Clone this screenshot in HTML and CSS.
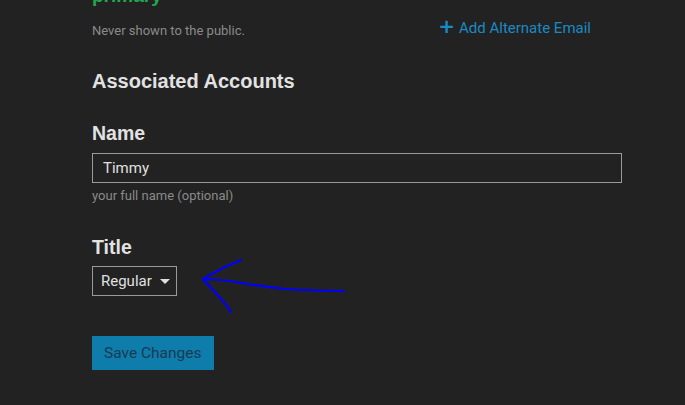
FILE: index.html
```html
<!DOCTYPE html>
<html lang="en">
<head>
  <meta charset="UTF-8" />
  <meta name="viewport" content="width=device-width, initial-scale=1.0" />
  <title>Account Settings</title>
  <link rel="stylesheet" href="styles.css">
</head>
<body>
  <div class="container">
    <!-- Email block (scrolled partly out of view) -->
    <div class="email-row">
      <div>
        <div class="primary">primary</div>
        <div class="hint">Never shown to the public.</div>
      </div>
      <a class="add-link" href="#"><span class="plus">+</span>Add Alternate Email</a>
    </div>

    <h2 class="section">Associated Accounts</h2>

    <label class="field-label" for="name">Name</label>
    <input id="name" class="text-input" type="text" value="Timmy" />
    <div class="hint">your full name (optional)</div>

    <label class="field-label title-label" for="title">Title</label>
    <div class="select">Regular <span class="caret"></span></div>

    <button class="btn">Save Changes</button>
  </div>

  <!-- hand-drawn annotation arrow -->
  <svg class="arrow" width="685" height="405" viewBox="0 0 685 405">
    <path d="M344 291 C320 291 300 290 285 289 C260 286 245 284 230 281 C220 280 210 279 203 279" fill="none" stroke="#0000ff" stroke-width="2.2" stroke-linecap="round"/>
    <path d="M203 279 C215 272 228 265 241 260" fill="none" stroke="#0000ff" stroke-width="2.2" stroke-linecap="round"/>
    <path d="M203 279 C212 290 224 300 231 312" fill="none" stroke="#0000ff" stroke-width="2.2" stroke-linecap="round"/>
  </svg>
</body>
</html>
```

FILE: styles.css
```css
body {
  margin: 0;
  padding: 0;
  background: #222222;
  font-family: "Liberation Sans", Arial, sans-serif;
  color: #dddddd;
  overflow: hidden;
}
.container {
  width: 530px;
  margin-left: 92px;
  margin-top: -15px;
}
.email-row {
  display: flex;
  justify-content: space-between;
  align-items: flex-end;
  padding-right: 31px;
}
.primary {
  color: #22a84c;
  font-weight: bold;
  font-size: 19px;
  line-height: 22px;
}
.hint {
  font-family: Roboto, sans-serif;
  font-size: 13px;
  color: #8a8a8a;
  line-height: 16px;
}
.email-row .hint {
  margin-top: 16px;
}
.add-link {
  color: #1a8ac2;
  text-decoration: none;
  font-family: Roboto, sans-serif;
  font-size: 15px;
  line-height: 18px;
  margin-bottom: 2px;
}
.plus {
  font-weight: bold;
  font-size: 20px;
  margin-right: 4px;
  font-family: "DejaVu Sans", sans-serif;
}
.section {
  font-size: 20px;
  margin: 30px 0 0;
  line-height: 24px;
  color: #e2e2e2;
}
.field-label {
  display: block;
  font-weight: bold;
  font-size: 19.5px;
  line-height: 24px;
  margin-top: 28px;
  color: #e2e2e2;
}
.text-input {
  display: block;
  box-sizing: border-box;
  width: 100%;
  height: 30px;
  margin-top: 8px;
  padding: 0 10px;
  background: #222222;
  border: 1px solid #9a9a9a;
  color: #e0e0e0;
  font-family: Roboto, sans-serif;
  font-size: 15px;
}
.text-input + .hint {
  margin-top: 5px;
}
.title-label {
  margin-top: 31px;
}
.select {
  display: inline-flex;
  align-items: center;
  box-sizing: border-box;
  height: 30px;
  margin-top: 7px;
  padding: 0 6px 0 8px;
  border: 1px solid #9a9a9a;
  font-family: Roboto, sans-serif;
  font-size: 15px;
  color: #e0e0e0;
}
.caret {
  display: inline-block;
  margin-left: 8px;
  width: 0;
  height: 0;
  border-left: 5px solid transparent;
  border-right: 5px solid transparent;
  border-top: 5px solid #e0e0e0;
}
.btn {
  display: block;
  margin-top: 40px;
  height: 34px;
  padding: 0 12px;
  background: #0e7dab;
  color: #1a3a52;
  border: none;
  font-family: Roboto, sans-serif;
  font-size: 15.5px;
  cursor: pointer;
}
.arrow {
  position: absolute;
  left: 0;
  top: 0;
}
```
